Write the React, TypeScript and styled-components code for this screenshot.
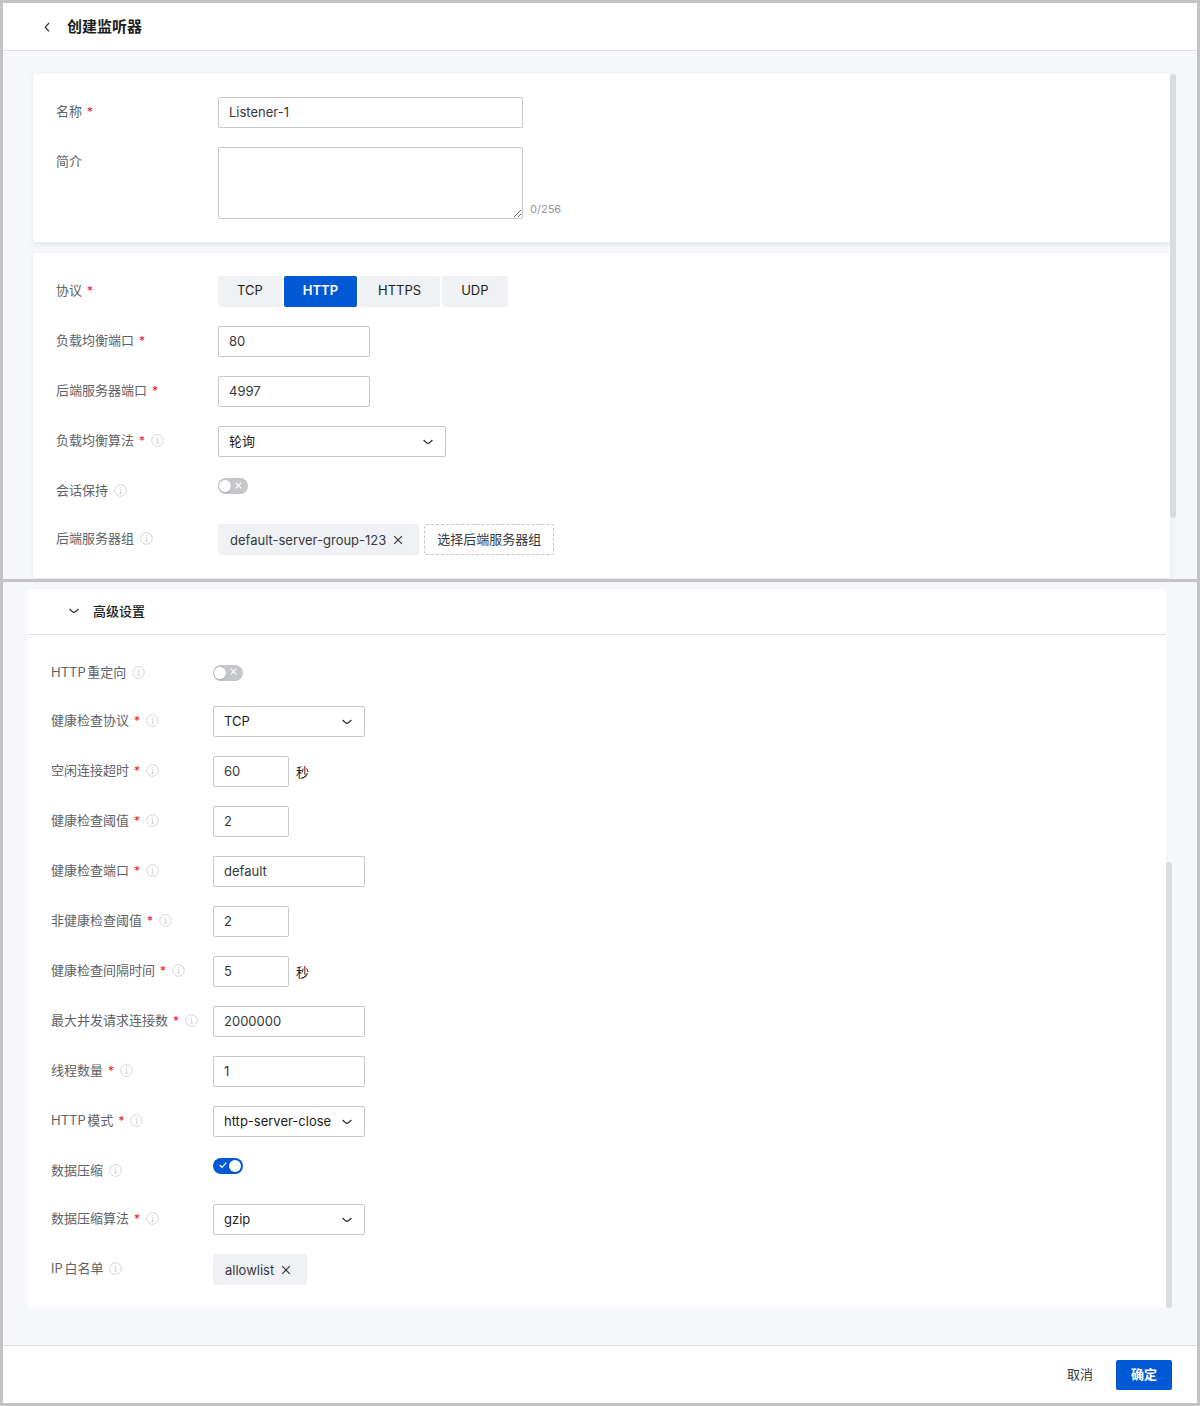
import React, { useState } from "react";
import styled, { createGlobalStyle, css } from "styled-components";

const color = {
  frame: "#c3c3c3",
  page: "#f5f7fb",
  line: "#dcdee1",
  border: "#c7c8ca",
  fill: "#f0f1f5",
  primary: "#0059d4",
  text: "#36383c",
  strong: "#1b1d21",
  label: "#606266",
  muted: "#96989c",
  thumb: "#dadbdd",
};

const GlobalStyle = createGlobalStyle`
  *, *::before, *::after { box-sizing: border-box; }
  body {
    margin: 0;
    background: ${color.page};
    color: ${color.text};
    font-family: Inter, "Noto Sans CJK SC", sans-serif;
    font-size: 13px;
    line-height: 20px;
  }
  button, input, select, textarea { font: inherit; color: inherit; margin: 0; }
`;

const Frame = styled.main`
  min-height: 100vh;
  border: 3px solid ${color.frame};
  display: flex;
  flex-direction: column;
`;

const Header = styled.header`
  display: flex;
  align-items: center;
  gap: 11px;
  height: 48px;
  padding: 0 35px;
  background: #fff;
  border-bottom: 1px solid ${color.line};
`;

const BackButton = styled.button`
  display: flex;
  padding: 2px;
  border: 0;
  background: none;
  cursor: pointer;
`;

const Title = styled.h1`
  margin: 0;
  color: ${color.strong};
  font-size: 15px;
  font-weight: 600;
  line-height: 24px;
`;

const BasicSection = styled.section`
  display: flex;
  padding: 23px 21px 1px 30px;
`;

const AdvancedSection = styled.section`
  display: flex;
  flex: 1;
  padding: 7px 25px 37px;
  border-top: 3px solid ${color.frame};
`;

const Panels = styled.div`
  flex: 1;
  min-width: 0;
  display: flex;
  flex-direction: column;
  gap: 11px;
`;

const Panel = styled.div`
  background: #fff;
  border-radius: 2px;
  box-shadow: 0 2px 4px rgba(40, 50, 70, 0.1);
`;

const FlatPanel = styled(Panel)`
  box-shadow: none;
`;

const ScrollTrack = styled.div<{ $end?: boolean }>`
  display: flex;
  flex-direction: column;
  justify-content: ${(p) => (p.$end ? "flex-end" : "flex-start")};
  width: 6px;
`;

const ScrollThumb = styled.div<{ $size: number }>`
  flex: 0 0 ${(p) => p.$size}%;
  border-radius: 3px;
  background: ${color.thumb};
`;

const Rows = styled.div`
  display: flex;
  flex-direction: column;
  gap: 19px;
  padding: 23px;
`;

const PanelHeader = styled.div`
  padding: 0 41px;
  border-bottom: 1px solid ${color.line};
`;

const Disclosure = styled.button`
  display: flex;
  align-items: center;
  gap: 14px;
  height: 45px;
  padding: 0 0 2px;
  border: 0;
  background: none;
  color: ${color.strong};
  font-weight: 500;
  cursor: pointer;
`;

const Row = styled.div`
  display: flex;
  min-height: 29px;
`;

const LabelCell = styled.div`
  display: flex;
  align-items: center;
  gap: 6px;
  flex: 0 0 162px;
  height: 28px;
  color: ${color.label};
`;

const LabelText = styled.label`
  white-space: nowrap;
  text-autospace: normal;
`;

const Required = styled.span`
  margin-left: 5px;
  color: #f5121d;
  font-size: 12px;
`;

const Control = styled.div<{ $align?: string }>`
  display: flex;
  align-items: ${(p) => p.$align ?? "center"};
  gap: 7px;
`;

const widths = { small: 76, medium: 152, large: 228, wide: 305 };
type Size = keyof typeof widths;

const box = css`
  border: 1px solid ${color.border};
  border-radius: 2px;
  background: #fff;
  outline: none;
  &:focus-visible {
    border-color: ${color.primary};
  }
`;

const TextInput = styled.input<{ $size: Size }>`
  ${box}
  width: ${(p) => widths[p.$size]}px;
  height: 31px;
  padding: 0 10px 2px;
`;

const TextArea = styled.textarea`
  ${box}
  display: block;
  width: ${widths.wide}px;
  height: 72px;
  padding: 5px 10px;
  resize: both;
`;

const Counter = styled.span`
  color: ${color.muted};
  font-size: 11px;
`;

const Unit = styled.span`
  color: ${color.strong};
`;

const SelectBox = styled.span<{ $size: Size }>`
  display: grid;
  align-items: center;
  width: ${(p) => widths[p.$size]}px;
  > * {
    grid-area: 1 / 1;
  }
  > svg {
    justify-self: end;
    margin-right: 13px;
    pointer-events: none;
  }
`;

const NativeSelect = styled.select`
  ${box}
  appearance: none;
  width: 100%;
  height: 31px;
  padding: 0 28px 2px 10px;
  color: ${color.strong};
`;

const Segments = styled.div`
  display: flex;
  gap: 2px;
`;

const Segment = styled.button<{ $active: boolean }>`
  height: 31px;
  padding: 0 19px 3px;
  border: 0;
  border-radius: 2px;
  background: ${(p) => (p.$active ? color.primary : color.fill)};
  color: ${(p) => (p.$active ? "#fff" : color.strong)};
  font-weight: ${(p) => (p.$active ? 600 : 400)};
  cursor: pointer;
`;

const SwitchInput = styled.input`
  appearance: none;
  grid-area: 1 / 1;
  width: 30px;
  height: 16px;
  border-radius: 8px;
  background: #c5c6ca;
  cursor: pointer;
  &::before {
    content: "";
    display: block;
    width: 12px;
    height: 12px;
    margin: 2px 1px;
    border-radius: 50%;
    background: #fff;
    box-shadow: 0 1px 2px rgba(0, 0, 0, 0.15);
  }
  &:checked {
    background: ${color.primary};
  }
  &:checked::before {
    margin-left: 16px;
  }
`;

const SwitchBox = styled.span<{ $on: boolean }>`
  display: grid;
  align-items: center;
  margin: 2px 0;
  > svg {
    grid-area: 1 / 1;
    justify-self: ${(p) => (p.$on ? "start" : "end")};
    margin: 0 6px 2px;
    pointer-events: none;
  }
`;

const Tag = styled.span`
  display: inline-flex;
  align-items: center;
  gap: 7px;
  height: 31px;
  padding: 0 16px 0 12px;
  border-radius: 2px;
  background: ${color.fill};
`;

const TagClose = styled.button`
  display: flex;
  padding: 0;
  border: 0;
  background: none;
  cursor: pointer;
`;

const TagList = styled.div`
  display: flex;
  gap: 5px;
`;

const DashedButton = styled.button`
  height: 31px;
  padding: 0 12px 2px;
  border: 1px dashed #c4c5c8;
  border-radius: 2px;
  background: #fff;
  cursor: pointer;
`;

const Footer = styled.footer`
  display: flex;
  justify-content: flex-end;
  align-items: center;
  gap: 8px;
  height: 58px;
  padding: 0 25px;
  background: #fff;
  border-top: 1px solid ${color.line};
`;

const FooterButton = styled.button<{ $primary?: boolean }>`
  height: 30px;
  padding: 0 15px 2px;
  border: 0;
  border-radius: 2px;
  background: ${(p) => (p.$primary ? color.primary : "transparent")};
  color: ${(p) => (p.$primary ? "#fff" : color.text)};
  font-weight: ${(p) => (p.$primary ? 600 : 400)};
  cursor: pointer;
`;

const ChevronLeft = () => (
  <svg width="14" height="14" viewBox="0 0 14 14" fill="none" stroke="#2c2e32" strokeWidth="1.2" aria-hidden="true">
    <path d="M9 3 5.3 7.2 9 11.4" />
  </svg>
);

const ChevronDown = () => (
  <svg width="10" height="10" viewBox="0 0 10 10" fill="none" stroke="#2c2e32" strokeWidth="1.3" aria-hidden="true">
    <path d="M0.6 3 Q4 6.4 5 6.4 Q6 6.4 9.4 3" />
  </svg>
);

const Cross = () => (
  <svg width="10" height="10" viewBox="0 0 10 10" fill="none" stroke="#36383c" strokeWidth="1.2" aria-hidden="true">
    <path d="M1.2 1.2 8.8 8.8M8.8 1.2 1.2 8.8" />
  </svg>
);

const SwitchMark = ({ on }: { on: boolean }) =>
  on ? (
    <svg width="8" height="8" viewBox="0 0 8 8" fill="none" stroke="#fff" strokeWidth="1.2" aria-hidden="true">
      <path d="M0.7 4 3 6.4 7.4 1.6" />
    </svg>
  ) : (
    <svg width="7" height="7" viewBox="0 0 7 7" fill="none" stroke="#fff" strokeWidth="1.2" aria-hidden="true">
      <path d="M0.7 0.7 6.3 6.3M6.3 0.7 0.7 6.3" />
    </svg>
  );

const InfoIcon = () => (
  <svg width="13" height="13" viewBox="0 0 13 13" fill="none" stroke="#d3d4d7" aria-hidden="true">
    <circle cx="6.5" cy="6.5" r="5.8" />
    <path d="M5.4 5.4H6.7V9.2M5.2 9.3H8" />
    <circle cx="6.5" cy="3.6" r="0.7" fill="#d3d4d7" stroke="none" />
  </svg>
);

type FieldProps = {
  label: string;
  id: string;
  required?: boolean;
  info?: boolean;
  group?: boolean;
  align?: string;
  children: React.ReactNode;
};

const Field = ({ label, id, required, info, group, align, children }: FieldProps) => (
  <Row>
    <LabelCell>
      <LabelText as={group ? "span" : "label"} id={`${id}-label`} htmlFor={group ? undefined : id}>
        {label}
        {required && <Required>*</Required>}
      </LabelText>
      {info && <InfoIcon />}
    </LabelCell>
    <Control $align={align}>{children}</Control>
  </Row>
);

const Select = ({ id, size, options }: { id: string; size: Size; options: string[] }) => (
  <SelectBox $size={size}>
    <NativeSelect id={id}>
      {options.map((o) => (
        <option key={o}>{o}</option>
      ))}
    </NativeSelect>
    <ChevronDown />
  </SelectBox>
);

const Switch = ({ id, initial = false }: { id: string; initial?: boolean }) => {
  const [on, setOn] = useState(initial);
  return (
    <SwitchBox $on={on}>
      <SwitchInput id={id} type="checkbox" role="switch" checked={on} onChange={() => setOn(!on)} />
      <SwitchMark on={on} />
    </SwitchBox>
  );
};

const RemovableTag = ({ name }: { name: string }) => (
  <Tag>
    {name}
    <TagClose type="button" aria-label={`移除 ${name}`}>
      <Cross />
    </TagClose>
  </Tag>
);

type NumberField = { id: string; label: string; value: string; size: Size; unit?: string };

const advancedInputs: NumberField[] = [
  { id: "idle", label: "空闲连接超时", value: "60", size: "small", unit: "秒" },
  { id: "healthy", label: "健康检查阈值", value: "2", size: "small" },
  { id: "check-port", label: "健康检查端口", value: "default", size: "medium" },
  { id: "unhealthy", label: "非健康检查阈值", value: "2", size: "small" },
  { id: "interval", label: "健康检查间隔时间", value: "5", size: "small", unit: "秒" },
  { id: "max-conn", label: "最大并发请求连接数", value: "2000000", size: "medium" },
  { id: "threads", label: "线程数量", value: "1", size: "medium" },
];

const protocols = ["TCP", "HTTP", "HTTPS", "UDP"];

export default function App() {
  const [protocol, setProtocol] = useState("HTTP");
  const [intro, setIntro] = useState("");
  const [open, setOpen] = useState(true);

  return (
    <Frame>
      <GlobalStyle />
      <Header>
        <BackButton type="button" aria-label="返回">
          <ChevronLeft />
        </BackButton>
        <Title>创建监听器</Title>
      </Header>

      <BasicSection>
        <Panels>
          <Panel>
            <Rows>
              <Field id="name" label="名称" required>
                <TextInput id="name" $size="wide" defaultValue="Listener-1" />
              </Field>
              <Field id="intro" label="简介" align="flex-end">
                <TextArea id="intro" maxLength={256} value={intro} onChange={(e) => setIntro(e.target.value)} />
                <Counter>{intro.length}/256</Counter>
              </Field>
            </Rows>
          </Panel>
          <Panel>
            <Rows>
              <Field id="protocol" label="协议" required group>
                <Segments role="group" aria-labelledby="protocol-label">
                  {protocols.map((p) => (
                    <Segment
                      key={p}
                      type="button"
                      $active={p === protocol}
                      aria-pressed={p === protocol}
                      onClick={() => setProtocol(p)}
                    >
                      {p}
                    </Segment>
                  ))}
                </Segments>
              </Field>
              <Field id="lb-port" label="负载均衡端口" required>
                <TextInput id="lb-port" $size="medium" defaultValue="80" />
              </Field>
              <Field id="server-port" label="后端服务器端口" required>
                <TextInput id="server-port" $size="medium" defaultValue="4997" />
              </Field>
              <Field id="algorithm" label="负载均衡算法" required info>
                <Select id="algorithm" size="large" options={["轮询"]} />
              </Field>
              <Field id="session" label="会话保持" info align="flex-start">
                <Switch id="session" />
              </Field>
              <Field id="group" label="后端服务器组" info group>
                <TagList role="group" aria-labelledby="group-label">
                  <RemovableTag name="default-server-group-123" />
                  <DashedButton type="button">选择后端服务器组</DashedButton>
                </TagList>
              </Field>
            </Rows>
          </Panel>
        </Panels>
        <ScrollTrack>
          <ScrollThumb $size={88} />
        </ScrollTrack>
      </BasicSection>

      <AdvancedSection>
        <Panels>
          <FlatPanel>
            <PanelHeader>
              <Disclosure type="button" aria-expanded={open} onClick={() => setOpen(!open)}>
                <ChevronDown />
                高级设置
              </Disclosure>
            </PanelHeader>
            {open && (
              <Rows>
                <Field id="redirect" label="HTTP重定向" info>
                  <Switch id="redirect" />
                </Field>
                <Field id="check-protocol" label="健康检查协议" required info>
                  <Select id="check-protocol" size="medium" options={["TCP"]} />
                </Field>
                {advancedInputs.map((f) => (
                  <Field key={f.id} id={f.id} label={f.label} required info>
                    <TextInput id={f.id} $size={f.size} defaultValue={f.value} />
                    {f.unit && <Unit>{f.unit}</Unit>}
                  </Field>
                ))}
                <Field id="http-mode" label="HTTP模式" required info>
                  <Select id="http-mode" size="medium" options={["http-server-close"]} />
                </Field>
                <Field id="compress" label="数据压缩" info align="flex-start">
                  <Switch id="compress" initial />
                </Field>
                <Field id="compress-algo" label="数据压缩算法" required info>
                  <Select id="compress-algo" size="medium" options={["gzip"]} />
                </Field>
                <Field id="allow" label="IP白名单" info group>
                  <RemovableTag name="allowlist" />
                </Field>
              </Rows>
            )}
          </FlatPanel>
        </Panels>
        <ScrollTrack $end>
          <ScrollThumb $size={62} />
        </ScrollTrack>
      </AdvancedSection>

      <Footer>
        <FooterButton type="button">取消</FooterButton>
        <FooterButton type="submit" $primary>
          确定
        </FooterButton>
      </Footer>
    </Frame>
  );
}
